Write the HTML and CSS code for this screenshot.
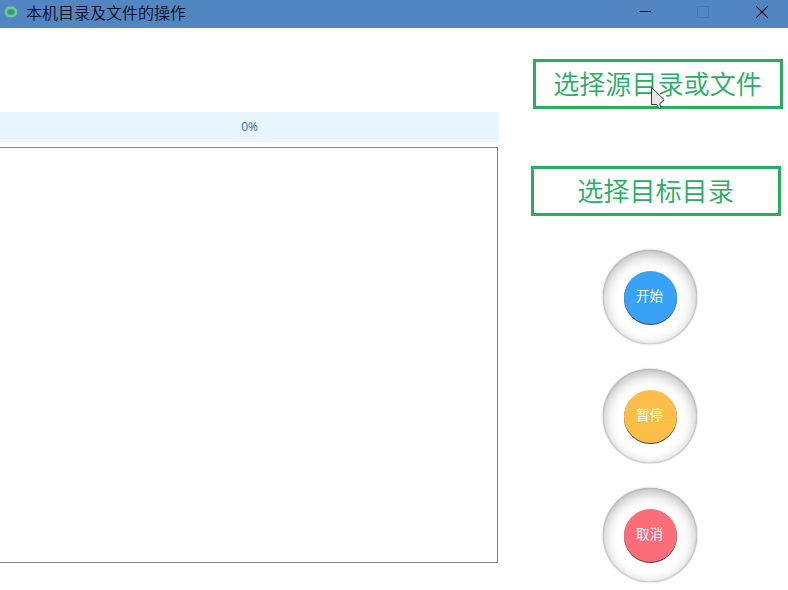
FILE: index.html
```html
<!DOCTYPE html>
<html lang="zh-CN">
<head>
<meta charset="utf-8">
<title>本机目录及文件的操作</title>
<link rel="stylesheet" href="styles.css">
</head>
<body>
<header class="titlebar">
  <svg class="app-icon" width="14" height="12" viewBox="0 0 14 12"><ellipse cx="7" cy="6" rx="5.2" ry="4.2" fill="#4f8fae" stroke="#6fcf8c" stroke-width="2.4"/><circle cx="7" cy="6" r="2.3" fill="#27a363"/></svg>
  <h1 class="title">本机目录及文件的操作</h1>
  <div class="controls">
    <svg width="12" height="12" viewBox="0 0 12 12"><path d="M1 5.5H13" stroke="#111"/></svg>
    <svg width="12" height="12" viewBox="0 0 12 12"><path d="M.5 .5H11.5V11.5H.5Z" fill="none" stroke="#4277bb"/></svg>
    <svg width="12" height="12" viewBox="0 0 12 12"><path d="M.3 .3L11.7 11.7M11.7 .3L.3 11.7" stroke="#111" stroke-width="1.1"/></svg>
  </div>
</header>
<main class="window">
  <section class="output">
    <div class="progress">0%</div>
    <div class="log"></div>
  </section>
  <aside class="actions">
    <button class="pick source">选择源目录或文件
      <svg class="pointer" width="15" height="23" viewBox="0 0 15 23"><path d="M.5 .5L13.2 12.7L8.6 16.8L10 20.5Q9 22.3 7.6 21L5.8 17.5H.5Z" fill="#e9e7e6" stroke="#403b38" stroke-width="1"/></svg>
    </button>
    <button class="pick target">选择目标目录</button>
    <div class="dials">
      <div class="dial"><button class="round start">开始</button></div>
      <div class="dial"><button class="round pause">暂停</button></div>
      <div class="dial"><button class="round cancel">取消</button></div>
    </div>
  </aside>
</main>
</body>
</html>
```
FILE: styles.css
```css
* { box-sizing: border-box; }
body {
  margin: 0;
  width: 788px;
  height: 590px;
  overflow: hidden;
  background: #fff;
  font-family: "Noto Sans CJK SC", sans-serif;
}
button { font-family: inherit; padding: 0; border: 0; }
.titlebar {
  display: flex;
  align-items: center;
  height: 28px;
  padding: 0 20px 4px 4px;
  background: #5286c3;
}
.app-icon { display: block; }
.title {
  margin: 0 0 0 8px;
  padding-bottom: 1px;
  font-size: 16px;
  line-height: 24px;
  font-weight: 350;
  color: #080f18;
}
.controls { display: flex; gap: 47px; margin-left: auto; }
.controls svg { display: block; overflow: visible; }
.window { display: flex; }
.output { width: 499px; padding-top: 84px; }
.progress {
  height: 30px;
  background: #e8f6ff;
  color: #4379ac;
  font: 12px/30px "Noto Sans", sans-serif;
  letter-spacing: -.2px;
  text-align: center;
}
.log {
  width: 498px;
  height: 416px;
  margin-top: 5px;
  border: 1px solid #7b8794;
  border-left: 0;
}
.actions { width: 289px; padding: 31px 0 0 32px; }
.pick {
  position: relative;
  display: block;
  width: 250px;
  height: 50px;
  padding: 0 1px 2px 0;
  border: 3px solid #29ae61;
  background: #fff;
  color: #27ae60;
  font-size: 26.1px;
  font-weight: 350;
  line-height: 42px;
}
.source { margin-left: 2px; }
.target { margin-top: 57px; }
.pointer { position: absolute; left: 115px; top: 25px; }
.dials {
  display: flex;
  flex-direction: column;
  gap: 25px;
  padding: 34px 0 0 72px;
}
.dial {
  display: flex;
  align-items: center;
  justify-content: center;
  width: 94px;
  height: 94px;
  border-radius: 50%;
  background: #fff;
  box-shadow: inset 0 4px 14px rgba(0,0,0,.3), inset 0 0 2px rgba(0,0,0,.25), 0 0 2px rgba(0,0,0,.4);
}
.round {
  width: 53px;
  height: 53px;
  border-radius: 50%;
  color: #fff;
  font-size: 13.5px;
  line-height: 48px;
  padding: 0 1px 4px 0;
  box-shadow: 0 1px 0 #444;
}
.start { background: #38a2f6; }
.pause { background: #fdbd49; }
.cancel { background: #fb6d78; }
```
